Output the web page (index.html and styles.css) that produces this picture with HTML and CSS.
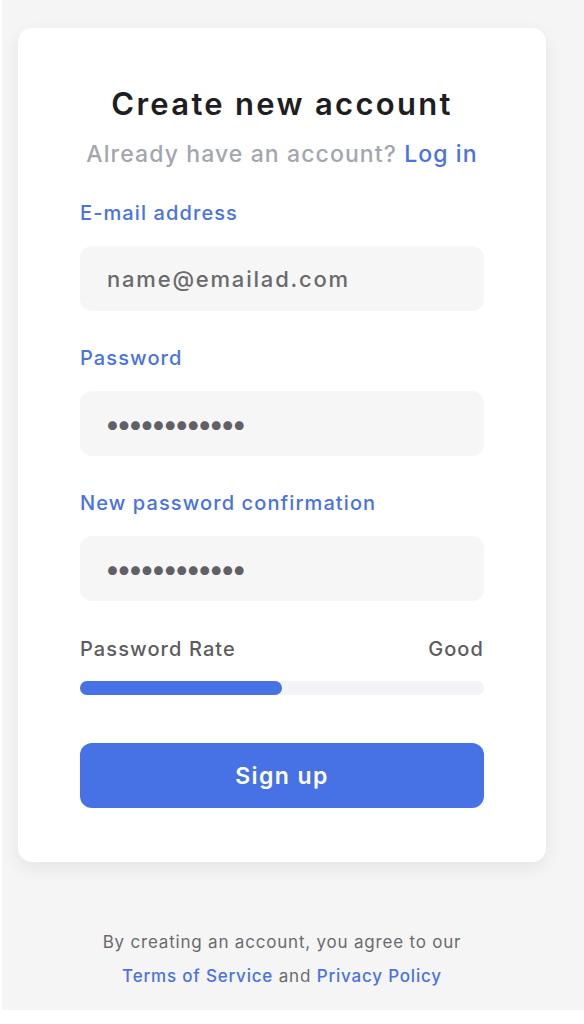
FILE: index.html
```html
<!DOCTYPE html>
<html lang="en">

<head>
    <meta charset="UTF-8">
    <meta name="viewport" content="width=device-width, initial-scale=1.0">
    <title>Create new account</title>
    <link rel="stylesheet" href="styles.css">
</head>

<body>
    <div class="page">
        <form class="card">
            <h1>Create new account</h1>
            <p class="sub">Already have an account? <a href="#">Log in</a></p>

            <label for="email">E-mail address</label>
            <div class="field" id="email">name@emailad.com</div>

            <label for="pass">Password</label>
            <div class="field dots" id="pass">&bull;&bull;&bull;&bull;&bull;&bull;&bull;&bull;&bull;&bull;&bull;&bull;</div>

            <label for="confirm">New password confirmation</label>
            <div class="field dots" id="confirm">&bull;&bull;&bull;&bull;&bull;&bull;&bull;&bull;&bull;&bull;&bull;&bull;</div>

            <div class="rate">
                <span>Password Rate</span>
                <span>Good</span>
            </div>
            <div class="bar"><div class="fill" style="width: 50%"></div></div>

            <button type="button" class="btn">Sign up</button>
        </form>

        <p class="terms">
            By creating an account, you agree to our<br>
            <a href="#">Terms of Service</a> and <a href="#">Privacy Policy</a>
        </p>
    </div>
</body>

</html>
```

FILE: styles.css
```css
body {
    margin: 0;
    background-color: #fff;
    font-family: Inter, "Noto Sans", sans-serif;
}

.page {
    margin-left: 2px;
    height: 1010px;
    background-color: #f5f5f6;
    padding: 28px 38px 0 16px;
    box-sizing: border-box;
}

.card {
    background-color: #fff;
    border-radius: 14px;
    box-shadow: 0 6px 18px rgba(0, 0, 0, 0.07);
    padding: 56px 62px 54px;
    display: flex;
    flex-direction: column;
}

h1 {
    margin: 0;
    text-align: center;
    font-size: 31px;
    font-weight: 600;
    letter-spacing: 2.3px;
    color: #1e1e22;
    line-height: 40px;
}

.sub {
    margin: 15px 0 0;
    text-align: center;
    font-size: 23px;
    font-weight: 500;
    letter-spacing: 1.1px;
    color: #a3a6ae;
    line-height: 30px;
}

a {
    color: #4a72e2;
    text-decoration: none;
}

label {
    margin-top: 31px;
    font-size: 20px;
    font-weight: 500;
    letter-spacing: 1.1px;
    color: #4a72e2;
    line-height: 26px;
}

.field {
    margin-top: 20px;
    height: 65px;
    border-radius: 12px;
    background-color: #f6f6f7;
    padding: 0 27px;
    display: flex;
    align-items: center;
    font-size: 22px;
    font-weight: 500;
    letter-spacing: 1.8px;
    color: #6a6a6c;
}

.field + label {
    margin-top: 34px;
}

.dots {
    font-size: 28px;
    letter-spacing: -3.4px;
    color: #606066;
    padding-left: 25px;
}

.rate {
    margin-top: 35px;
    display: flex;
    justify-content: space-between;
    font-size: 20px;
    font-weight: 500;
    letter-spacing: 1.1px;
    color: #5c5c60;
    line-height: 26px;
}

.bar {
    margin-top: 19px;
    height: 14px;
    border-radius: 7px;
    background-color: #f3f4f8;
}

.fill {
    height: 100%;
    border-radius: 7px;
    background-color: #4672e6;
}

.btn {
    margin-top: 48px;
    height: 65px;
    border: none;
    border-radius: 12px;
    background-color: #4672e6;
    color: #fff;
    font-family: inherit;
    font-size: 23px;
    font-weight: 600;
    letter-spacing: 1.4px;
}

.terms {
    margin: 63px 0 0;
    text-align: center;
    font-size: 17px;
    letter-spacing: 0.8px;
    color: #6b6b6e;
    line-height: 34px;
}

.terms a {
    font-weight: 500;
}
```
